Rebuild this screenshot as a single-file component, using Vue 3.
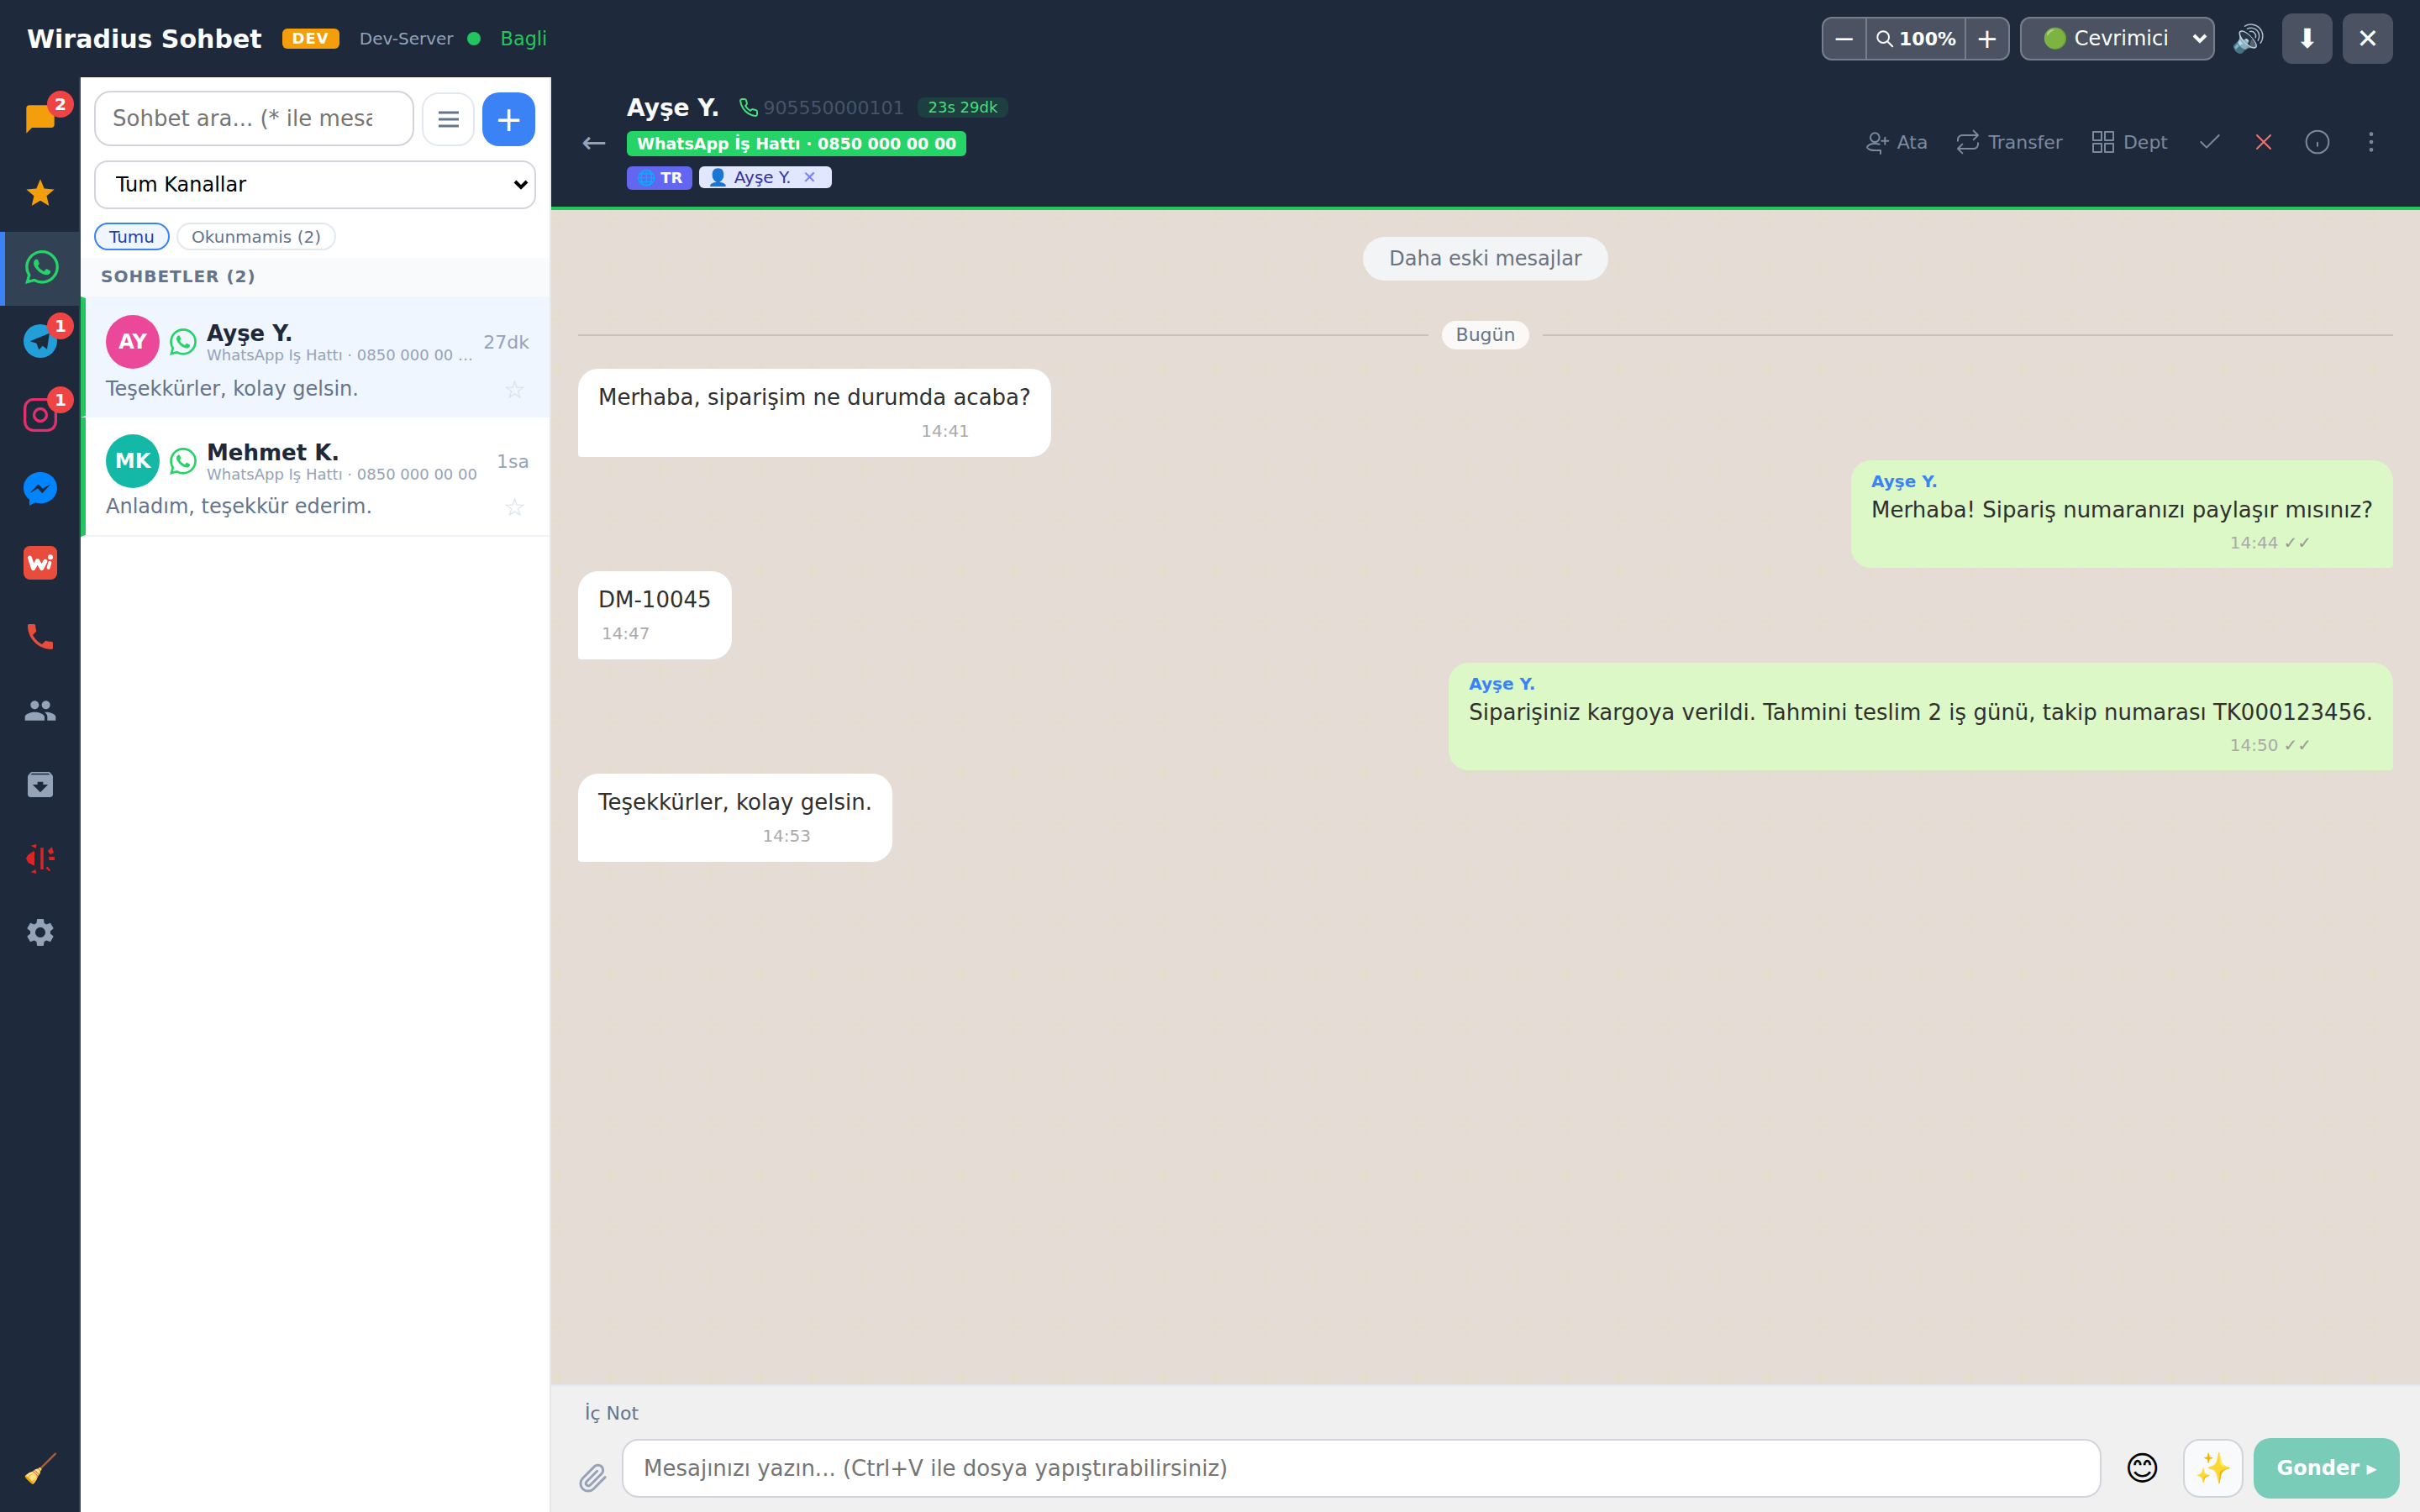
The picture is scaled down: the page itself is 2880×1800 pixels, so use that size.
<script setup>
const line = 'WhatsApp Iş Hattı · 0850 000 00 00'

const convs = [
  { id: 1, initials: 'AY', color: '#ec4899', name: 'Ayşe Y.', line, time: '27dk', text: 'Teşekkürler, kolay gelsin.', active: true },
  { id: 2, initials: 'MK', color: '#14b8a6', name: 'Mehmet K.', line, time: '1sa', text: 'Anladım, teşekkür ederim.', active: false }
]

const messages = [
  { id: 1, out: false, text: 'Merhaba, siparişim ne durumda acaba?', time: '14:41' },
  { id: 2, out: true, text: 'Merhaba! Sipariş numaranızı paylaşır mısınız?', time: '14:44' },
  { id: 3, out: false, text: 'DM-10045', time: '14:47' },
  { id: 4, out: true, text: 'Siparişiniz kargoya verildi. Tahmini teslim 2 iş günü, takip numarası TK000123456.', time: '14:50' },
  { id: 5, out: false, text: 'Teşekkürler, kolay gelsin.', time: '14:53' }
]

const waPath = 'M17.472 14.382c-.297-.149-1.758-.867-2.03-.967-.273-.099-.471-.148-.67.15-.197.297-.767.966-.94 1.164-.173.199-.347.223-.644.075-.297-.15-1.255-.463-2.39-1.475-.883-.788-1.48-1.761-1.653-2.059-.173-.297-.018-.458.13-.606.134-.133.298-.347.446-.52.149-.174.198-.298.298-.497.099-.198.05-.371-.025-.52-.075-.149-.669-1.612-.916-2.207-.242-.579-.487-.5-.669-.51-.173-.008-.371-.01-.57-.01-.198 0-.52.074-.792.372-.272.297-1.04 1.016-1.04 2.479 0 1.462 1.065 2.875 1.213 3.074.149.198 2.096 3.2 5.077 4.487.709.306 1.262.489 1.694.625.712.227 1.36.195 1.871.118.571-.085 1.758-.719 2.006-1.413.248-.694.248-1.289.173-1.413-.074-.124-.272-.198-.57-.347m-5.421 7.403h-.004a9.87 9.87 0 01-5.031-1.378l-.361-.214-3.741.982.998-3.648-.235-.374a9.86 9.86 0 01-1.51-5.26c.001-5.45 4.436-9.884 9.888-9.884 2.64 0 5.122 1.03 6.988 2.898a9.825 9.825 0 012.893 6.994c-.003 5.45-4.437 9.884-9.885 9.884m8.413-18.297A11.815 11.815 0 0012.05 0C5.495 0 .16 5.335.157 11.892c0 2.096.547 4.142 1.588 5.945L.057 24l6.305-1.654a11.882 11.882 0 005.683 1.448h.005c6.554 0 11.89-5.335 11.893-11.893a11.821 11.821 0 00-3.48-8.413z'
</script>

<template>
  <div class="app">
    <header class="topbar">
      <span class="brand">Wiradius Sohbet</span>
      <span class="dev">DEV</span>
      <span class="server">Dev-Server</span>
      <span class="dot"></span>
      <span class="status">Bagli</span>
      <div class="top-right">
        <div class="zoom-group">
          <button class="zoom-btn">−</button>
          <span class="zoom-val">
            <svg width="11" height="11" viewBox="0 0 24 24" fill="none" stroke="#fff" stroke-width="2.2" stroke-linecap="round"><circle cx="10" cy="10" r="7.5" /><path d="M16 16l6 6" /></svg>
            100%
          </span>
          <button class="zoom-btn">+</button>
        </div>
        <select class="presence"><option>🟢 Cevrimici</option></select>
        <span class="sound">🔊</span>
        <button class="square-btn">⬇</button>
        <button class="square-btn">✕</button>
      </div>
    </header>

    <div class="body">
      <nav class="rail">
        <div class="rail-item">
          <svg class="ic" viewBox="0 0 24 24" fill="#f59e0b"><path d="M20 2H4c-1.1 0-2 .9-2 2v18l4-4h14c1.1 0 2-.9 2-2V4c0-1.1-.9-2-2-2z" /></svg>
          <span class="badge">2</span>
        </div>
        <div class="rail-item">
          <svg class="ic" viewBox="0 0 24 24" fill="#f59e0b"><path d="M12 17.27L18.18 21l-1.64-7.03L22 9.24l-7.19-.61L12 2 9.19 8.63 2 9.24l5.46 4.73L5.82 21z" /></svg>
        </div>
        <div class="rail-item on">
          <svg class="ic" viewBox="0 0 24 24" fill="#25d366"><path :d="waPath" /></svg>
        </div>
        <div class="rail-item">
          <svg class="ic" viewBox="0 0 24 24"><circle cx="12" cy="12" r="12" fill="#229ed9" /><path d="M18.5 6.5L4.6 12.2l4.7 1.5 1.7 4.6 2.6-2.8 3.2 2.3z" fill="#1e293b" /></svg>
          <span class="badge">1</span>
        </div>
        <div class="rail-item">
          <svg class="ic" viewBox="0 0 24 24" fill="none" stroke="#e1306c" stroke-width="2"><rect x="1" y="1" width="22" height="22" rx="6" /><circle cx="12" cy="12" r="4.5" /></svg>
          <span class="badge">1</span>
        </div>
        <div class="rail-item">
          <svg class="ic" viewBox="0 0 24 24"><path d="M12 0C5.4 0 0 5 0 11.2c0 3.4 1.6 6.4 4.2 8.4V24l4-2.2c1.2.4 2.5.6 3.8.6 6.6 0 12-5 12-11.2S18.6 0 12 0z" fill="#0084ff" /><path d="M4.5 15l6-6.4 3.2 3.3 5.8-3.3-6.1 6.5-3.2-3.4z" fill="#1e293b" /></svg>
        </div>
        <div class="rail-item">
          <svg class="ic" viewBox="0 0 24 24"><rect width="24" height="24" rx="4.5" fill="#e74c3c" /><path d="M4.5 8.5l2.5 7.5 3-5.5 3 5.5 2.5-5" fill="none" stroke="#fff" stroke-width="3" stroke-linejoin="round" stroke-linecap="round" /><path d="M18.8 12l-1 3.5" stroke="#fff" stroke-width="2.4" stroke-linecap="round" /><circle cx="19.2" cy="8" r="1.8" fill="#fff" /></svg>
        </div>
        <div class="rail-item">
          <svg class="ic" viewBox="0 0 24 24" fill="#e74c3c"><path d="M6.62 10.79c1.44 2.83 3.76 5.14 6.59 6.59l2.2-2.2c.27-.27.67-.36 1.02-.24 1.12.37 2.33.57 3.57.57.55 0 1 .45 1 1V20c0 .55-.45 1-1 1-9.39 0-17-7.61-17-17 0-.55.45-1 1-1h3.5c.55 0 1 .45 1 1 0 1.25.2 2.45.57 3.57.11.35.03.74-.25 1.02l-2.2 2.2z" /></svg>
        </div>
        <div class="rail-item">
          <svg class="ic" viewBox="0 0 24 24" fill="#94a3b8"><path d="M16 11c1.66 0 2.99-1.34 2.99-3S17.66 5 16 5c-1.66 0-3 1.34-3 3s1.34 3 3 3zm-8 0c1.66 0 2.99-1.34 2.99-3S9.66 5 8 5C6.34 5 5 6.34 5 8s1.34 3 3 3zm0 2c-2.33 0-7 1.17-7 3.5V19h14v-2.5c0-2.33-4.67-3.5-7-3.5zm8 0c-.29 0-.62.02-.97.05 1.16.84 1.97 1.97 1.97 3.45V19h6v-2.5c0-2.33-4.67-3.5-7-3.5z" /></svg>
        </div>
        <div class="rail-item">
          <svg class="ic" viewBox="0 0 24 24" fill="#94a3b8"><path d="M20.54 5.23l-1.39-1.68C18.88 3.21 18.47 3 18 3H6c-.47 0-.88.21-1.16.55L3.46 5.23C3.17 5.57 3 6.02 3 6.5V19c0 1.1.9 2 2 2h14c1.1 0 2-.9 2-2V6.5c0-.48-.17-.93-.46-1.27zM12 17.5L6.5 12H10v-2h4v2h3.5L12 17.5zM5.12 5l.81-1h12l.94 1H5.12z" /></svg>
        </div>
        <div class="rail-item flat">
          <svg class="ic" viewBox="0 0 40 40" fill="#dc2626"><path d="M3 17.7l2.3-4 7.7-5v18l-7.7-4zM20.3 5.3h3.4V31h-3.4zM8.7 2.7L15.3 1l-.6 5zM8.7 34.3l5.6-3.3 1 5zM28.7 9.3l5-5 2.3 6.7-4 2.3zM30.3 16H37v4h-6.7zM26.3 29.3l2.4-1.6 3.3 4.3-1.3 1.3z" /></svg>
        </div>
        <div class="rail-item">
          <svg class="ic" viewBox="0 0 24 24" fill="#94a3b8"><path d="M19.14 12.94c.04-.3.06-.61.06-.94 0-.32-.02-.64-.07-.94l2.03-1.58c.18-.14.23-.41.12-.61l-1.92-3.32c-.12-.22-.37-.29-.59-.22l-2.39.96c-.5-.38-1.03-.7-1.62-.94l-.36-2.54c-.04-.24-.24-.41-.48-.41h-3.84c-.24 0-.43.17-.47.41l-.36 2.54c-.59.24-1.13.57-1.62.94l-2.39-.96c-.22-.08-.47 0-.59.22L2.74 8.87c-.12.21-.08.47.12.61l2.03 1.58c-.05.3-.09.63-.09.94s.02.64.07.94l-2.03 1.58c-.18.14-.23.41-.12.61l1.92 3.32c.12.22.37.29.59.22l2.39-.96c.5.38 1.03.7 1.62.94l.36 2.54c.05.24.24.41.48.41h3.84c.24 0 .44-.17.47-.41l.36-2.54c.59-.24 1.13-.56 1.62-.94l2.39.96c.22.08.47 0 .59-.22l1.92-3.32c.12-.22.07-.47-.12-.61l-2.01-1.58zM12 15.6c-1.98 0-3.6-1.62-3.6-3.6s1.62-3.6 3.6-3.6 3.6 1.62 3.6 3.6-1.62 3.6-3.6 3.6z" /></svg>
        </div>
        <div class="rail-item broom">🧹</div>
      </nav>

      <aside class="list">
        <div class="search-row">
          <input class="search" placeholder="Sohbet ara... (* ile mesaj ara)">
          <button class="menu-btn">
            <svg width="16" height="16" viewBox="0 0 24 24" fill="none" stroke="#64748b" stroke-width="2.4"><path d="M3 6h18M3 12h18M3 18h18" /></svg>
          </button>
          <button class="add-btn">+</button>
        </div>
        <select class="channels"><option>Tum Kanallar</option></select>
        <div class="tabs">
          <span class="tab sel">Tumu</span>
          <span class="tab">Okunmamis (2)</span>
        </div>
        <div class="list-head">SOHBETLER (2)</div>
        <div v-for="c in convs" :key="c.id" class="conv" :class="{ active: c.active }">
          <div class="conv-top">
            <span class="avatar" :style="{ background: c.color }">{{ c.initials }}</span>
            <svg class="conv-wa" viewBox="0 0 24 24" fill="#25d366"><path :d="waPath" /></svg>
            <div class="conv-info">
              <div class="conv-name">{{ c.name }}</div>
              <div class="conv-line">{{ c.line }}</div>
            </div>
            <span class="conv-time">{{ c.time }}</span>
          </div>
          <div class="conv-bottom">
            <span class="conv-text">{{ c.text }}</span>
            <span class="conv-star">☆</span>
          </div>
        </div>
      </aside>

      <main class="chat">
        <div class="chat-head">
          <span class="back">←</span>
          <div class="who">
            <div class="who-row">
              <span class="who-name">Ayşe Y.</span>
              <svg class="who-phone" viewBox="0 0 24 24" fill="none" stroke="#4ade80" stroke-width="2" stroke-linejoin="round"><path d="M22 16.9v3a2 2 0 0 1-2.2 2 19.8 19.8 0 0 1-8.6-3.1 19.5 19.5 0 0 1-6-6A19.8 19.8 0 0 1 2.1 4.2 2 2 0 0 1 4.1 2h3a2 2 0 0 1 2 1.7c.1 1 .4 1.9.7 2.8a2 2 0 0 1-.5 2.1L8.1 9.9a16 16 0 0 0 6 6l1.3-1.3a2 2 0 0 1 2.1-.4c.9.3 1.8.6 2.8.7a2 2 0 0 1 1.7 2z" /></svg>
              <span class="who-num">905550000101</span>
              <span class="timer">23s 29dk</span>
            </div>
            <div class="line-pill">WhatsApp İş Hattı · 0850 000 00 00</div>
            <div class="tags">
              <span class="lang">🌐 TR</span>
              <span class="contact">👤 Ayşe Y. <span class="contact-x">✕</span></span>
            </div>
          </div>
          <div class="actions">
            <span class="act">
              <svg class="act-ic" viewBox="0 0 24 24"><circle cx="10" cy="8" r="4" /><path d="M3 17c0-2 3-3.5 7-3.5 1.5 0 2.8.2 4 .6M4 18c1 1 3 1.5 6 1.5h5v3M19 8v6M16 11h6" /></svg>
              Ata
            </span>
            <span class="act">
              <svg class="act-ic" viewBox="0 0 24 24"><path d="m17 2 4 4-4 4M3 11v-1a4 4 0 0 1 4-4h14M7 22l-4-4 4-4M21 13v1a4 4 0 0 1-4 4H3" /></svg>
              Transfer
            </span>
            <span class="act dept">
              <svg class="act-ic" viewBox="0 0 24 24"><rect x="3" y="3" width="7.5" height="7.5" /><rect x="13.5" y="3" width="7.5" height="7.5" /><rect x="3" y="13.5" width="7.5" height="7.5" /><rect x="13.5" y="13.5" width="7.5" height="7.5" /></svg>
              Dept
            </span>
            <span class="act">
              <svg class="act-ic" viewBox="0 0 24 24"><path d="M20 6 9 17l-5-5" /></svg>
            </span>
            <span class="act">
              <svg class="act-ic red" viewBox="0 0 24 24"><path d="M18 6 6 18M6 6l12 12" /></svg>
            </span>
            <span class="act">
              <svg class="act-ic" viewBox="0 0 24 24"><circle cx="12" cy="12" r="10" /><path d="M12 12.5v3" /></svg>
            </span>
            <span class="act">
              <svg class="act-ic" viewBox="0 0 24 24"><circle cx="12" cy="5" r="1" /><circle cx="12" cy="12" r="1" /><circle cx="12" cy="19" r="1" /></svg>
            </span>
          </div>
        </div>

        <div class="thread">
          <button class="older">Daha eski mesajlar</button>
          <div class="day"><span>Bugün</span></div>
          <div v-for="m in messages" :key="m.id" class="msg" :class="m.out ? 'out' : 'in'">
            <div v-if="m.out" class="msg-from">Ayşe Y.</div>
            <div class="msg-text">{{ m.text }}</div>
            <div class="msg-meta">{{ m.time }}<span v-if="m.out" class="ticks">✓✓</span></div>
          </div>
        </div>

        <div class="composer">
          <div class="note">İç Not</div>
          <div class="send-row">
            <span class="clip">
              <svg width="18" height="18" viewBox="0 0 24 24" fill="none" stroke="#94a3b8" stroke-width="2" stroke-linecap="round" stroke-linejoin="round"><path d="M21.4 11.1l-9.2 9.2a6 6 0 0 1-8.5-8.5l9.2-9.2a4 4 0 0 1 5.7 5.7l-9.2 9.2a2 2 0 0 1-2.8-2.8l8.500-8.500" /></svg>
            </span>
            <input class="msg-input" placeholder="Mesajınızı yazın... (Ctrl+V ile dosya yapıştırabilirsiniz)">
            <span class="smile">😊</span>
            <button class="spark">✨</button>
            <button class="send">Gonder ▸</button>
          </div>
        </div>
      </main>
    </div>
  </div>
</template>

<style scoped>
.app {
  zoom: 2;
  width: 1440px;
  height: 900px;
  display: flex;
  flex-direction: column;
  overflow: hidden;
  font-family: "DejaVu Sans", sans-serif;
  color: #1e293b;
}

button, input, select {
  font-family: inherit;
}

.topbar {
  height: 46px;
  flex: none;
  display: flex;
  align-items: center;
  padding: 0 16px;
  background: #1e293b;
}

.brand {
  font-size: 15px;
  font-weight: 700;
  color: #fff;
}

.dev {
  margin-left: 12px;
  padding: 0 6px;
  height: 12px;
  line-height: 12px;
  background: #f59e0b;
  border-radius: 3px;
  color: #fff;
  font-size: 9px;
  font-weight: 700;
  letter-spacing: 0.5px;
}

.server {
  margin-left: 12px;
  font-size: 10px;
  color: #94a3b8;
}

.dot {
  width: 8px;
  height: 8px;
  margin-left: 8px;
  border-radius: 50%;
  background: #22c55e;
}

.status {
  margin-left: 12px;
  font-size: 11.2px;
  color: #22c55e;
}

.top-right {
  margin-left: auto;
  display: flex;
  align-items: center;
}

.zoom-group {
  display: flex;
  height: 26px;
  border: 1px solid rgba(255, 255, 255, 0.25);
  border-radius: 6px;
  background: rgba(255, 255, 255, 0.2);
  box-sizing: border-box;
  overflow: hidden;
}

.zoom-btn {
  width: 25px;
  padding: 0;
  border: 0;
  background: none;
  color: #fff;
  font-size: 16px;
}

.zoom-val {
  width: 60px;
  box-sizing: border-box;
  display: flex;
  align-items: center;
  justify-content: center;
  gap: 3px;
  border-left: 1px solid rgba(255, 255, 255, 0.25);
  border-right: 1px solid rgba(255, 255, 255, 0.25);
  color: #fff;
  font-size: 11px;
  font-weight: 700;
}

.presence {
  appearance: none;
  width: 116px;
  height: 26px;
  margin-left: 6px;
  padding: 0 0 0 12.5px;
  border: 1px solid rgba(255, 255, 255, 0.25);
  border-radius: 6px;
  background: rgba(255, 255, 255, 0.2) url("data:image/svg+xml,%3Csvg xmlns='http://www.w3.org/2000/svg' width='9' height='6'%3E%3Cpath d='M1 1l3.5 3.5L8 1' fill='none' stroke='%23fff' stroke-width='2'/%3E%3C/svg%3E") no-repeat right 3.5px center;
  color: #fff;
  font-size: 12px;
}

.sound {
  width: 20px;
  flex: none;
  margin: 0 10px;
  font-size: 16px;
  text-align: center;
}

.square-btn {
  width: 30px;
  height: 30px;
  margin-left: 6px;
  padding: 0;
  border: 0;
  border-radius: 6px;
  background: rgba(255, 255, 255, 0.2);
  color: #fff;
  font-size: 16px;
}

.sound + .square-btn {
  margin-left: 0;
}

.body {
  flex: 1;
  display: flex;
  min-height: 0;
}

.rail {
  width: 48px;
  flex: none;
  box-sizing: border-box;
  padding: 4px 0;
  display: flex;
  flex-direction: column;
  background: #1e293b;
  border-right: 1px solid #334155;
}

.rail-item {
  position: relative;
  height: 44px;
  flex: none;
  display: flex;
  align-items: center;
  justify-content: center;
  padding: 0 0 2px 1px;
  box-sizing: border-box;
}

.rail-item.flat {
  padding-bottom: 0;
}

.rail-item.on {
  padding-left: 0;
  border-left: 3px solid #3b82f6;
  background: #334155;
}

.ic {
  width: 20px;
  height: 20px;
}

.badge {
  position: absolute;
  top: 4px;
  right: 3px;
  width: 16px;
  height: 16px;
  border-radius: 50%;
  background: #ef4444;
  color: #fff;
  font-size: 10px;
  font-weight: 700;
  line-height: 16px;
  text-align: center;
}

.broom {
  margin-top: auto;
  padding-bottom: 0;
  font-size: 17px;
}

.list {
  width: 280px;
  flex: none;
  box-sizing: border-box;
  display: flex;
  flex-direction: column;
  background: #fff;
  border-right: 1px solid #e5e7eb;
}

.search-row {
  display: flex;
  gap: 4.5px;
  padding: 8px 8px 0;
  height: 33px;
  box-sizing: content-box;
}

.search {
  width: 190.5px;
  box-sizing: border-box;
  flex: none;
  padding: 0 24px 0 10px;
  border: 1px solid #d1d5db;
  border-radius: 10px;
  font-size: 13px;
  outline: none;
}

.menu-btn, .add-btn {
  width: 31.5px;
  height: 32px;
  margin-top: 1px;
  flex: none;
  padding: 0;
  display: flex;
  align-items: center;
  justify-content: center;
  border-radius: 10px;
  border: 1px solid #e2e8f0;
  background: #fff;
}

.add-btn {
  border: 0;
  background: #3b82f6;
  color: #fff;
  font-size: 20px;
}

.channels {
  appearance: none;
  height: 29px;
  margin: 8.5px 8px 0;
  padding: 0 0 0 12px;
  border: 1px solid #d1d5db;
  border-radius: 8px;
  background: #fff url("data:image/svg+xml,%3Csvg xmlns='http://www.w3.org/2000/svg' width='9' height='6'%3E%3Cpath d='M1 1l3.5 3.5L8 1' fill='none' stroke='%23000' stroke-width='2'/%3E%3C/svg%3E") no-repeat right 3.5px center;
  color: #000;
  font-size: 12px;
}

.tabs {
  display: flex;
  gap: 4px;
  padding: 8px 8px 4.5px;
}

.tab {
  height: 16.5px;
  line-height: 15px;
  box-sizing: border-box;
  padding: 0 8px;
  border: 1px solid #e2e8f0;
  border-radius: 9px;
  color: #64748b;
  font-size: 10px;
}

.tab.sel {
  border-color: #3b82f6;
  background: #eff6ff;
  color: #1e40af;
}

.list-head {
  height: 23px;
  line-height: 22.5px;
  padding-left: 12px;
  background: #f8fafc;
  color: #64748b;
  font-size: 10px;
  font-weight: 700;
  letter-spacing: 0.5px;
}

.conv {
  height: 71px;
  box-sizing: border-box;
  padding: 10px 12px 0;
  border-left: 3px solid #22c55e;
  border-bottom: 1px solid #f1f5f9;
}

.conv.active {
  height: 72px;
  background: #eff6ff;
  border-top: 1px solid #eff6ff;
  border-bottom-color: #eff6ff;
}

.conv-top {
  display: flex;
  align-items: center;
}

.avatar {
  width: 32px;
  height: 32px;
  flex: none;
  border-radius: 50%;
  color: #fff;
  font-size: 12px;
  font-weight: 700;
  line-height: 32px;
  text-align: center;
}

.conv-wa {
  width: 16px;
  height: 16px;
  flex: none;
  margin-left: 6px;
}

.conv-info {
  flex: 1;
  min-width: 0;
  margin-left: 6px;
}

.conv-name {
  font-size: 13px;
  font-weight: 700;
  line-height: 16px;
  color: #1e293b;
}

.conv-line {
  margin-top: -0.5px;
  font-size: 9px;
  line-height: 11px;
  color: #94a3b8;
  white-space: nowrap;
  overflow: hidden;
  text-overflow: ellipsis;
}

.conv-time {
  flex: none;
  margin-left: 6px;
  font-size: 11px;
  color: #94a3b8;
}

.conv-bottom {
  margin-top: 2px;
  display: flex;
  justify-content: space-between;
  align-items: center;
  height: 18px;
}

.conv.active .conv-bottom {
  margin-top: 3px;
}

.conv-text {
  font-size: 12px;
  color: #64748b;
}

.conv-star {
  margin-right: 2px;
  font-size: 15px;
  color: #d5dde8;
}

.chat {
  flex: 1;
  min-width: 0;
  display: flex;
  flex-direction: column;
}

.chat-head {
  flex: none;
  display: flex;
  align-items: center;
  box-sizing: border-box;
  height: 79px;
  padding: 0 16px;
  background: #1e293b;
  border-bottom: 2px solid #22c55e;
}

.back {
  width: 19px;
  margin-right: 10px;
  color: #94a3b8;
  font-size: 18px;
  text-align: center;
}

.who {
  margin-bottom: 2px;
}

.who-row {
  display: flex;
  align-items: center;
  height: 20px;
}

.who-name {
  color: #f8fafc;
  font-size: 14px;
  font-weight: 700;
}

.who-phone {
  width: 12px;
  height: 12px;
  margin-left: 11px;
}

.who-num {
  margin-left: 3px;
  color: #475569;
  font-size: 11px;
}

.timer {
  margin-left: 7.5px;
  height: 12px;
  line-height: 12px;
  padding: 0 6.5px;
  border-radius: 4px;
  background: rgba(34, 197, 94, 0.15);
  color: #4ade80;
  font-size: 9px;
}

.line-pill {
  width: fit-content;
  margin-top: 4px;
  height: 15px;
  line-height: 15px;
  padding: 0 6px;
  border-radius: 3px;
  background: #25d366;
  color: #fff;
  font-size: 9.5px;
  font-weight: 700;
}

.tags {
  display: flex;
  align-items: flex-start;
  gap: 4px;
  margin-top: 6px;
}

.lang {
  height: 14px;
  line-height: 14px;
  padding: 0 6px;
  border-radius: 3px;
  background: #6366f1;
  color: #fff;
  font-size: 9px;
  font-weight: 700;
}

.contact {
  height: 13px;
  line-height: 13px;
  padding: 0 9px 0 5px;
  border-radius: 3px;
  background: #e0e7ff;
  color: #3730a3;
  font-size: 10px;
}

.contact-x {
  margin-left: 3.5px;
  color: #6366f1;
  opacity: 0.8;
}

.actions {
  margin-left: auto;
  display: flex;
  align-items: center;
  gap: 6px;
}

.act {
  display: flex;
  align-items: center;
  gap: 4px;
  padding: 0 5px;
  color: #7c8aa0;
  font-size: 11px;
}

.act.dept {
  margin-right: 1px;
}

.act-ic {
  width: 16px;
  height: 16px;
  fill: none;
  stroke: #7c8aa0;
  stroke-width: 1.5;
  stroke-linecap: round;
  stroke-linejoin: round;
}

.act-ic.red {
  stroke: #f87171;
}

.thread {
  flex: 1;
  min-height: 0;
  display: flex;
  flex-direction: column;
  align-items: flex-start;
  gap: 2px;
  padding: 16px 16px 0;
  background-color: #e5ddd5;
  background-image: url("data:image/svg+xml,%3Csvg xmlns='http://www.w3.org/2000/svg' width='30' height='30'%3E%3Cpath d='M4 0h2v4h4v2H6v4H4V6H0V4h4z' fill='%23e4dccd'/%3E%3C/svg%3E");
  background-size: 30px 30px;
}

.older {
  align-self: center;
  height: 26px;
  width: 146px;
  padding: 0;
  border: 0;
  border-radius: 13px;
  background: #f3f4f6;
  color: #6b7280;
  font-size: 12px;
}

.day {
  align-self: stretch;
  margin: 22px 0 9.5px;
  display: flex;
  align-items: center;
  gap: 8px;
}

.day::before, .day::after {
  content: "";
  flex: 1;
  height: 1px;
  background: #c9c1ba;
}

.day span {
  height: 17px;
  line-height: 17px;
  padding: 0 8.5px;
  border-radius: 9px;
  background: #faf9f7;
  color: #64748b;
  font-size: 11px;
}

.msg {
  box-sizing: border-box;
  padding: 8px 12px;
  border-radius: 12px;
}

.msg.in {
  background: #fff;
  border-bottom-left-radius: 2px;
}

.msg.out {
  align-self: flex-end;
  background: #dcf8c6;
  border-bottom-right-radius: 2px;
}

.msg-from {
  margin-bottom: 3.5px;
  color: #3b82f6;
  font-size: 10px;
  font-weight: 700;
  line-height: 9px;
}

.msg-text {
  color: #303030;
  font-size: 13px;
  line-height: 18px;
}

.msg-meta {
  margin-top: 4px;
  padding-right: 36.5px;
  padding-bottom: 0.5px;
  color: #aaa;
  font-size: 10px;
  line-height: 14px;
  text-align: right;
}

.msg.out .msg-meta {
  margin-top: 3.5px;
  padding-bottom: 0;
}

.ticks {
  margin-left: 3px;
  color: #999;
  font-size: 10px;
}

.composer {
  flex: none;
  box-sizing: border-box;
  height: 76px;
  padding: 9.5px 12px 0 16px;
  background: #f0f0f0;
  border-top: 1px solid #e2e8f0;
}

.note {
  padding-left: 4px;
  height: 14px;
  line-height: 14px;
  color: #64748b;
  font-size: 11px;
}

.send-row {
  margin-top: 7.5px;
  display: flex;
  align-items: center;
  gap: 6px;
}

.clip {
  width: 20px;
  flex: none;
  align-self: flex-end;
  margin-bottom: 3px;
  display: flex;
}

.msg-input {
  flex: 1;
  min-width: 0;
  height: 35px;
  box-sizing: border-box;
  padding: 0 12px;
  border: 1px solid #d1d5db;
  border-radius: 10px;
  background: #fff;
  font-size: 13px;
  outline: none;
}

.smile {
  width: 36.5px;
  flex: none;
  text-align: center;
  color: #000;
  font-size: 20px;
}

.spark {
  width: 36px;
  height: 35px;
  flex: none;
  padding: 0;
  border: 1px solid #d1d5db;
  border-radius: 10px;
  background: #f8fafc;
  font-size: 18px;
}

.send {
  width: 87px;
  height: 36px;
  flex: none;
  padding: 0;
  border: 0;
  border-radius: 10px;
  background: #78ccb8;
  color: #fff;
  font-size: 12px;
  font-weight: 700;
}
</style>

<style>
html, body {
  margin: 0;
  overflow: hidden;
}
</style>
